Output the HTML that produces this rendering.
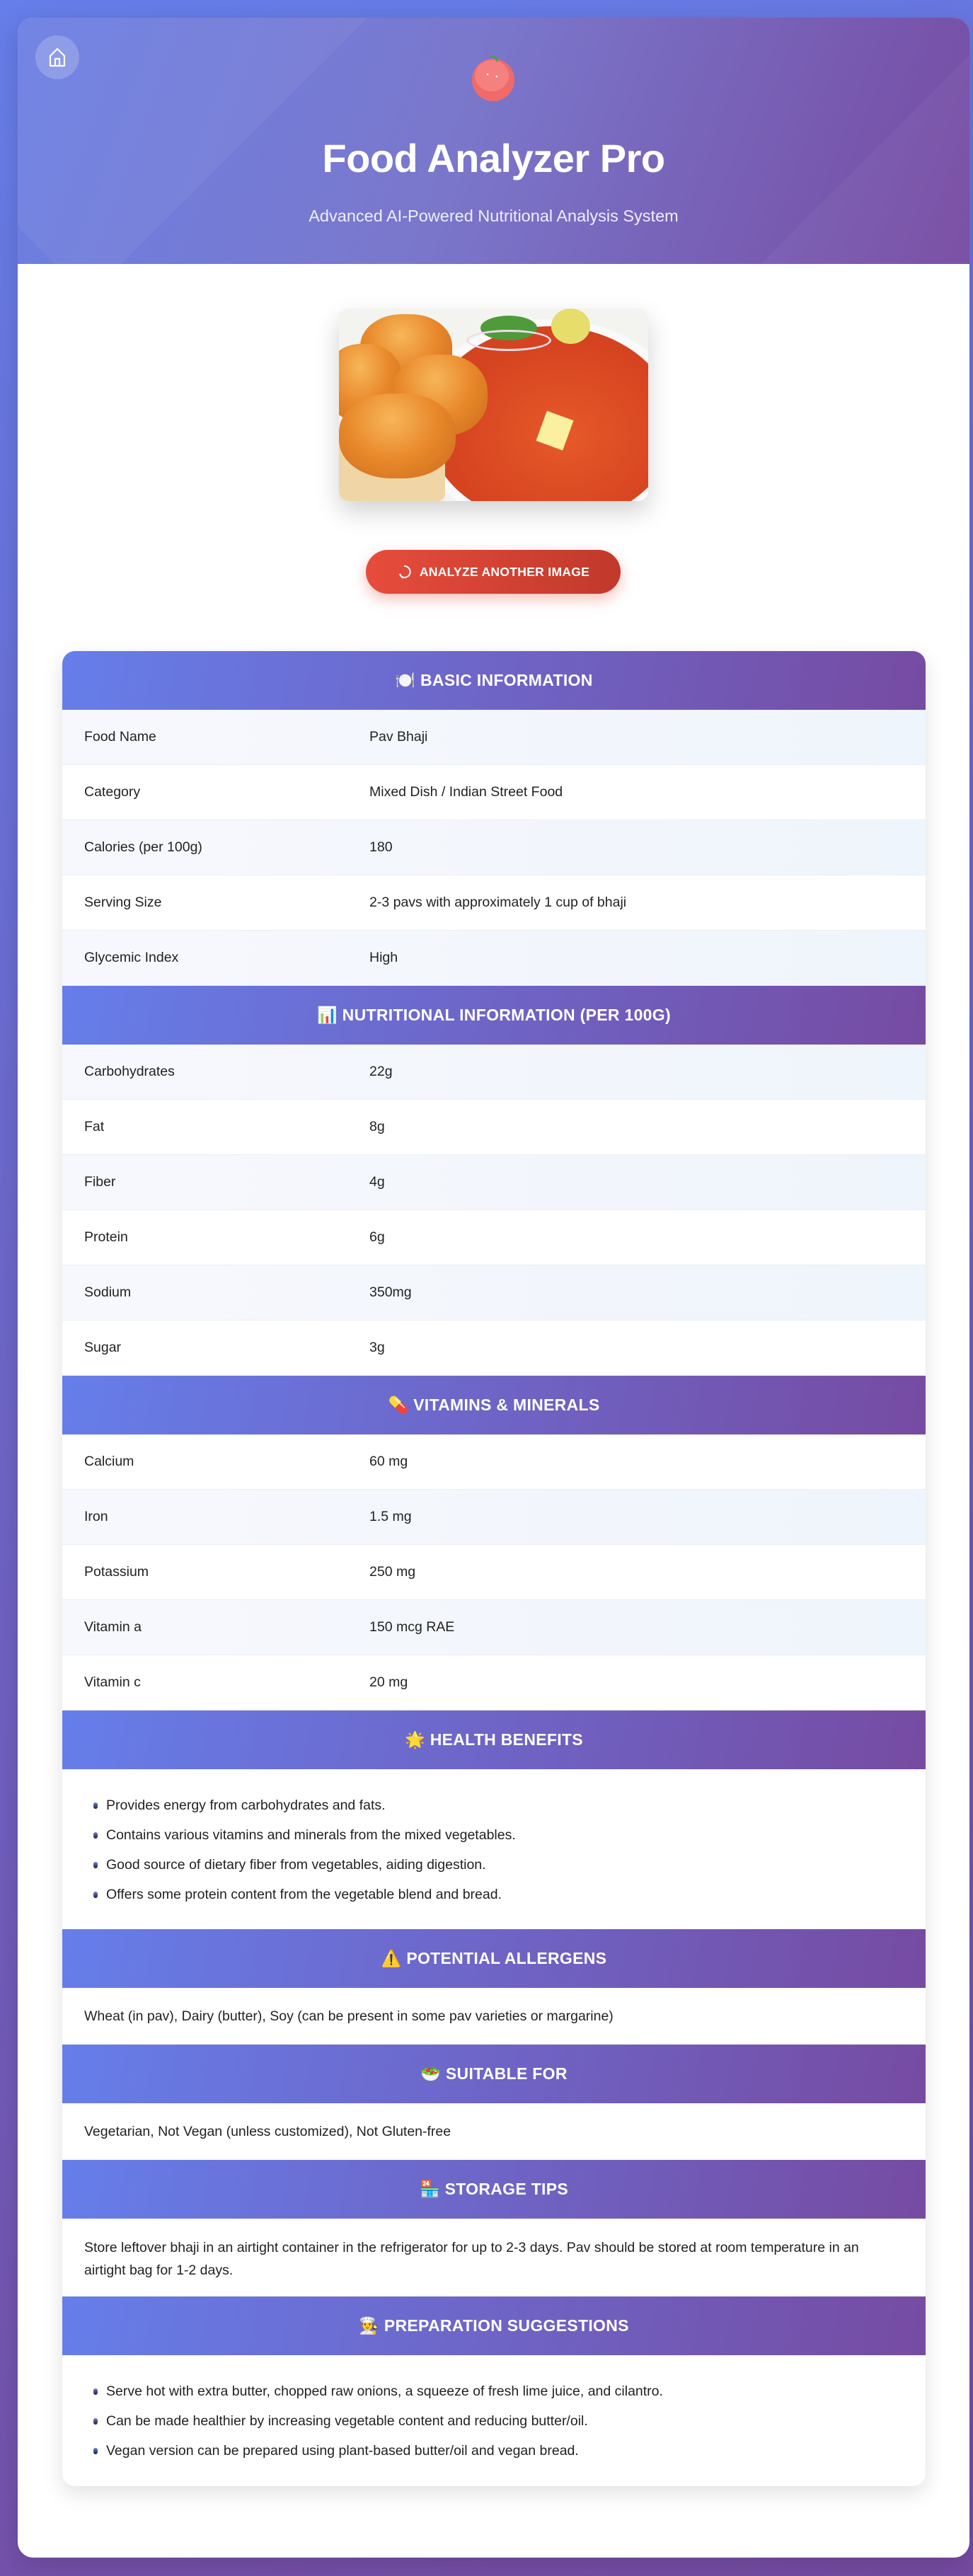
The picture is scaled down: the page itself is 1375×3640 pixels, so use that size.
<!DOCTYPE html>
<html><head><meta charset="utf-8"><style>
*{box-sizing:border-box;margin:0;padding:0}
html,body{width:1375px;height:3640px;overflow:hidden}
body{background:linear-gradient(160deg,#667eea 0%,#764ba2 100%);font-family:"Liberation Sans","DejaVu Sans",sans-serif;position:relative}
.card{position:absolute;left:25px;top:25px;width:1345px;height:3589px;background:#fff;border-radius:22px;overflow:hidden;box-shadow:0 10px 40px rgba(0,0,0,.15)}
.hdr{position:absolute;left:0;top:0;width:100%;height:348px;background:linear-gradient(110deg,#6b7fe3 0%,#7a78cc 45%,#764ba2 100%);overflow:hidden}
.hdr:before{content:"";position:absolute;left:-250px;top:-450px;width:700px;height:700px;background:rgba(255,255,255,.05);transform:rotate(45deg)}
.hdr:after{content:"";position:absolute;right:-350px;bottom:-550px;width:700px;height:700px;background:rgba(255,255,255,.04);transform:rotate(45deg)}
.home{position:absolute;left:25px;top:25px;width:62px;height:62px;border-radius:50%;background:rgba(255,255,255,.2);display:flex;align-items:center;justify-content:center}
.tomato{position:absolute;left:638px;top:50px;width:68px;height:68px}
h1{position:absolute;left:0;width:100%;top:166px;text-align:center;color:#fff;font-size:56px;font-weight:bold;letter-spacing:-0.5px}
.sub{position:absolute;left:0;width:100%;top:267px;text-align:center;color:#eef;font-size:23.5px}
.img{position:absolute;left:454px;top:411px;width:437px;height:272px;border-radius:14px;overflow:hidden;box-shadow:0 15px 35px rgba(0,0,0,.18);background:#f3f3f0}
.bun{position:absolute;border-radius:45%;background:radial-gradient(ellipse at 45% 30%,#f7b65a 0%,#e8882a 50%,#c96a1c 100%)}
.btn{position:absolute;left:492px;top:752px;width:360px;height:62px;border-radius:31px;background:linear-gradient(90deg,#e74c3c,#c0392b);box-shadow:0 8px 20px rgba(231,76,60,.35);color:#fff;font-weight:bold;font-size:17.5px;letter-spacing:.3px;display:flex;align-items:center;justify-content:center;gap:12px}
.tbl{position:absolute;left:63px;top:895px;width:1220px;height:2593px;border-radius:18px;overflow:hidden;background:#fff;box-shadow:0 10px 30px rgba(0,0,0,.12)}
.sh{height:83px;background:linear-gradient(100deg,#667eea 0%,#764ba2 100%);color:#fff;font-weight:bold;font-size:23px;display:flex;align-items:center;justify-content:center;gap:10px;letter-spacing:.3px}
.row{height:78px;display:flex;align-items:center;font-size:19.5px;color:#222;border-bottom:1px solid #eceef3}
.row.l{background:linear-gradient(90deg,#f7f8fd,#eff5fc)}
.row span{display:block}
.row .k{width:434px;padding-left:31px}
.sec{padding:26px 31px;font-size:19.5px;color:#222;line-height:28px}
ul{list-style:none;padding:30px 31px 28px 31px}
li{font-size:19.5px;color:#222;height:42px;line-height:42px;padding-left:31px;position:relative}
li:before{content:"";position:absolute;left:13px;top:17px;width:6px;height:9px;border-radius:3px;background:linear-gradient(#667eea,#222)}
</style></head><body>
<div class="card">
 <div class="hdr">
  <div class="home"><svg width="26" height="30" viewBox="0 0 26 30"><path d="M3 13 L13 3 L23 13 V27 H3 Z M10 27 V17 H16 V27" fill="none" stroke="#fff" stroke-width="2.2" stroke-linejoin="round"/></svg></div>
  <svg class="tomato" viewBox="0 0 68 68"><ellipse cx="34" cy="38" rx="30" ry="30" fill="#f06a6a"/><ellipse cx="32" cy="32" rx="24" ry="22" fill="#f58080"/><path d="M30 6 Q36 2 40 12" stroke="#3aa648" stroke-width="2.5" fill="none"/><circle cx="26" cy="30" r="1.3" fill="#fff"/><circle cx="39" cy="33" r="1.3" fill="#fff"/></svg>
  <h1>Food Analyzer Pro</h1>
  <div class="sub">Advanced AI-Powered Nutritional Analysis System</div>
 </div>
 <div class="img">
  <div style="position:absolute;left:110px;top:15px;width:380px;height:300px;border-radius:50%;background:#fafafa"></div>
  <div style="position:absolute;left:125px;top:25px;width:350px;height:280px;border-radius:50%;background:radial-gradient(ellipse at 55% 55%,#e65a2a,#d64320 60%,#c84a25)"></div>
  <div style="position:absolute;left:200px;top:10px;width:80px;height:35px;border-radius:50%;background:#4f9a3a"></div>
  <div style="position:absolute;left:180px;top:30px;width:120px;height:30px;border-radius:50%;border:3px solid #eedcea"></div>
  <div style="position:absolute;left:300px;top:0;width:55px;height:50px;border-radius:50%;background:#e6dd6a"></div>
  <div style="position:absolute;left:285px;top:150px;width:40px;height:45px;background:#fbefa0;transform:rotate(20deg)"></div>
  <div class="bun" style="left:30px;top:8px;width:130px;height:100px"></div>
  <div class="bun" style="left:-20px;top:50px;width:110px;height:110px"></div>
  <div class="bun" style="left:75px;top:65px;width:135px;height:115px"></div>
  <div style="position:absolute;left:0;top:180px;width:150px;height:92px;background:#f0d6a6;border-radius:10px"></div>
  <div class="bun" style="left:0;top:120px;width:165px;height:120px"></div>
 </div>
 <div class="btn"><svg width="20" height="24" viewBox="0 0 20 24"><path d="M10 4 A8 8 0 1 1 6 18.5 M6 18.5 L4 15 M6 18.5 L9 21" fill="none" stroke="#fff" stroke-width="2"/></svg>ANALYZE ANOTHER IMAGE</div>
 <div class="tbl">
  <div class="sh">🍽️ BASIC INFORMATION</div>
  <div class="row l"><span class="k">Food Name</span><span class="v">Pav Bhaji</span></div>
  <div class="row"><span class="k">Category</span><span class="v">Mixed Dish / Indian Street Food</span></div>
  <div class="row l"><span class="k">Calories (per 100g)</span><span class="v">180</span></div>
  <div class="row"><span class="k">Serving Size</span><span class="v">2-3 pavs with approximately 1 cup of bhaji</span></div>
  <div class="row l"><span class="k">Glycemic Index</span><span class="v">High</span></div>
  <div class="sh">📊 NUTRITIONAL INFORMATION (PER 100G)</div>
  <div class="row l"><span class="k">Carbohydrates</span><span class="v">22g</span></div>
  <div class="row"><span class="k">Fat</span><span class="v">8g</span></div>
  <div class="row l"><span class="k">Fiber</span><span class="v">4g</span></div>
  <div class="row"><span class="k">Protein</span><span class="v">6g</span></div>
  <div class="row l"><span class="k">Sodium</span><span class="v">350mg</span></div>
  <div class="row"><span class="k">Sugar</span><span class="v">3g</span></div>
  <div class="sh">💊 VITAMINS &amp; MINERALS</div>
  <div class="row"><span class="k">Calcium</span><span class="v">60 mg</span></div>
  <div class="row l"><span class="k">Iron</span><span class="v">1.5 mg</span></div>
  <div class="row"><span class="k">Potassium</span><span class="v">250 mg</span></div>
  <div class="row l"><span class="k">Vitamin a</span><span class="v">150 mcg RAE</span></div>
  <div class="row"><span class="k">Vitamin c</span><span class="v">20 mg</span></div>
  <div class="sh">🌟 HEALTH BENEFITS</div>
  <ul>
   <li>Provides energy from carbohydrates and fats.</li>
   <li>Contains various vitamins and minerals from the mixed vegetables.</li>
   <li>Good source of dietary fiber from vegetables, aiding digestion.</li>
   <li>Offers some protein content from the vegetable blend and bread.</li>
  </ul>
  <div class="sh">⚠️ POTENTIAL ALLERGENS</div>
  <div class="sec">Wheat (in pav), Dairy (butter), Soy (can be present in some pav varieties or margarine)</div>
  <div class="sh">🥗 SUITABLE FOR</div>
  <div class="sec">Vegetarian, Not Vegan (unless customized), Not Gluten-free</div>
  <div class="sh">🏪 STORAGE TIPS</div>
  <div class="sec" style="padding:25px 31px 21px;line-height:32px">Store leftover bhaji in an airtight container in the refrigerator for up to 2-3 days. Pav should be stored at room temperature in an airtight bag for 1-2 days.</div>
  <div class="sh">👨‍🍳 PREPARATION SUGGESTIONS</div>
  <ul>
   <li>Serve hot with extra butter, chopped raw onions, a squeeze of fresh lime juice, and cilantro.</li>
   <li>Can be made healthier by increasing vegetable content and reducing butter/oil.</li>
   <li>Vegan version can be prepared using plant-based butter/oil and vegan bread.</li>
  </ul>
 </div>
</div>
</body></html>
